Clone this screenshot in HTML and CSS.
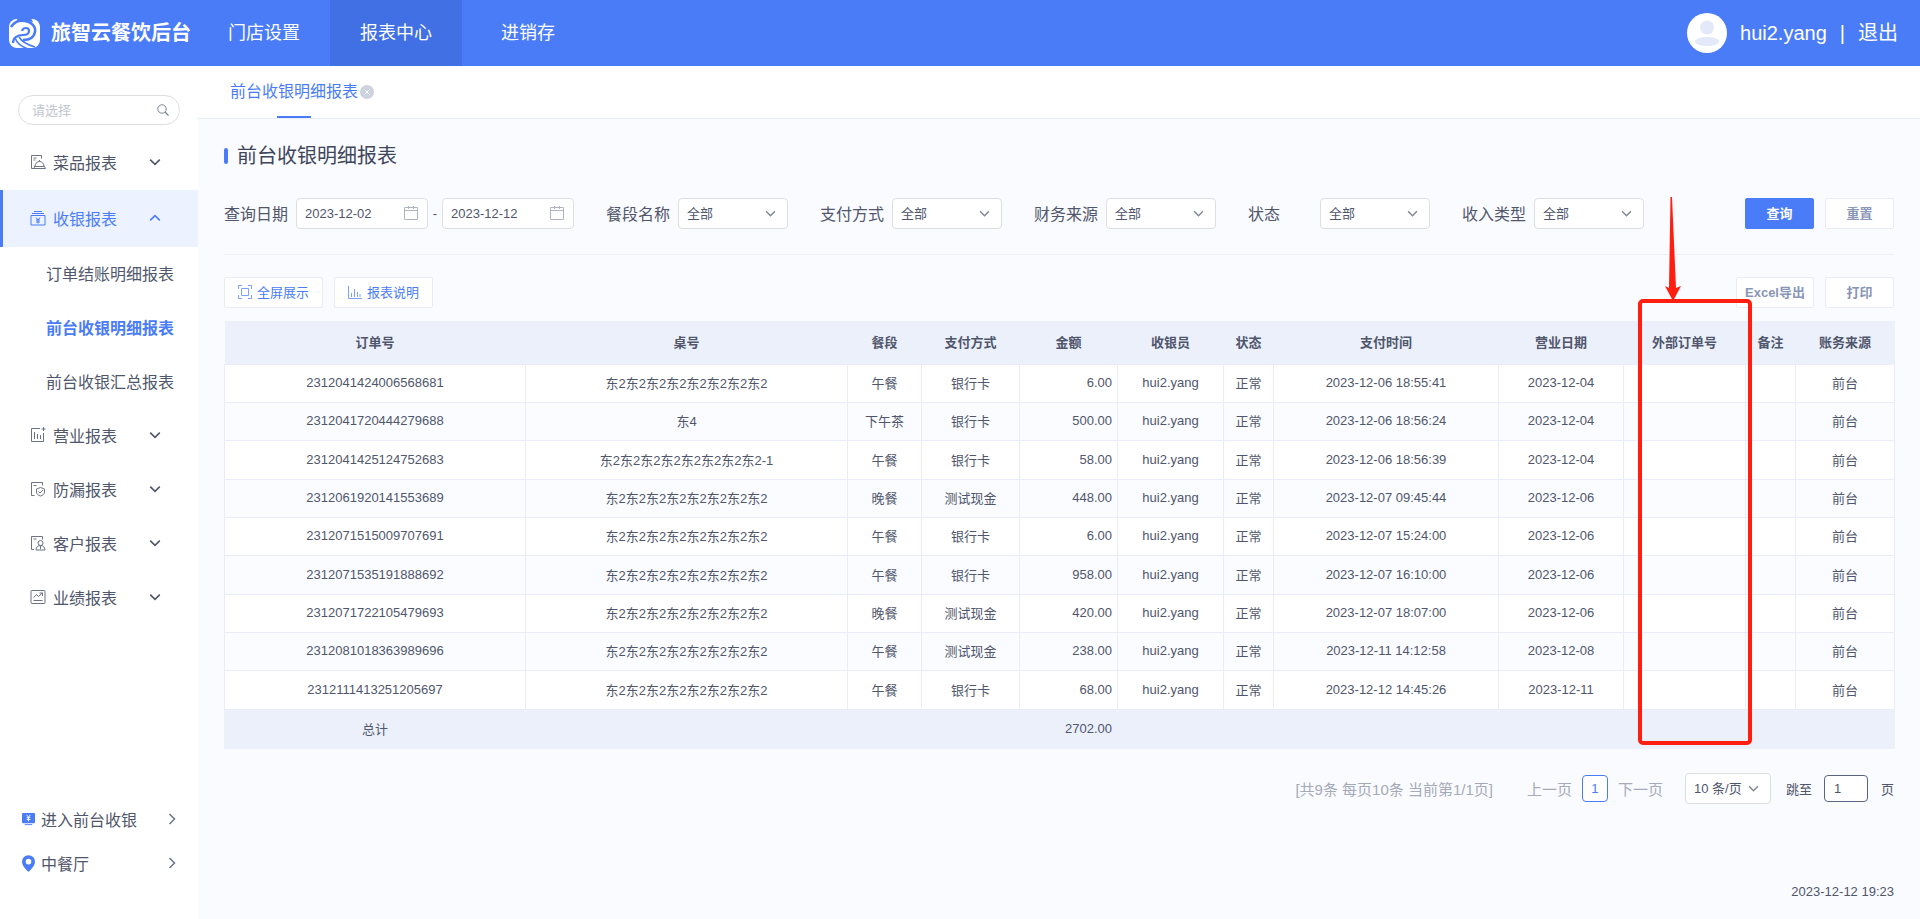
FILE: index.html
```
<!DOCTYPE html>
<html lang="zh-CN">
<head>
    <meta charset="UTF-8">
    <meta name="viewport" content="width=device-width, initial-scale=1.0">
    <title>前台收银明细报表</title>
    <link rel="stylesheet" href="styles.css">
</head>
<body>

<svg class="symbols" aria-hidden="true">
    <symbol id="down" viewBox="0 0 10 10"><path d="M1 3l4 4 4-4" fill="none" stroke="currentColor" stroke-width="1.3"/></symbol>
    <symbol id="right" viewBox="0 0 8 12"><path d="M1.5 1l5 5-5 5" fill="none" stroke="currentColor" stroke-width="1.5"/></symbol>
    <symbol id="calendar" viewBox="0 0 16 16"><path d="M1.5 2.5h13v12h-13zM1.5 5.5h13M5.5 1v3M10.5 1v3" fill="none" stroke="currentColor"/></symbol>
</svg>

<header class="header">
    <div class="brand">
        <svg class="logo" viewBox="0 0 31 31">
            <rect x="0" y="1" width="31" height="29" rx="8" fill="#fff"/>
            <path fill="#4a7cf8" d="M9 0h13l2 4-8-1-9 1z"/>
            <path fill="none" stroke="#4a7cf8" stroke-width="2.5" d="M2 9c3-5 8-7 14-6 7 1 11 6 10 11-1 6-6 8-12 8"/>
            <path fill="none" stroke="#4a7cf8" stroke-width="2.200" d="M13 13c1-4 7-4 7 0 0 3-3 4-6 4-6 0-10 3-10 8"/>
            <path fill="none" stroke="#4a7cf8" stroke-width="1.600" d="M6 20c2 5 7 9 13 11M10 19c3 5 9 8 16 10"/>
        </svg>
        <span>旅智云餐饮后台</span>
    </div>
    <nav class="top-nav">
        <a href="#">门店设置</a>
        <a href="#" class="active">报表中心</a>
        <a href="#">进销存</a>
    </nav>
    <div class="user">
        <svg class="avatar" viewBox="0 0 40 40">
            <circle cx="20" cy="20" r="20" fill="#fff"/>
            <circle cx="20" cy="14.500" r="7" fill="#e4e9fa"/>
            <ellipse cx="20" cy="28.500" rx="12" ry="4.500" fill="#e4e9fa"/>
        </svg>
        <span>hui2.yang</span>
        <span class="bar">|</span>
        <a href="#">退出</a>
    </div>
</header>

<div class="layout">
    <aside class="sidebar">
        <div class="search">
            <input type="text" placeholder="请选择" aria-label="请选择">
            <svg viewBox="0 0 12 12"><circle cx="5" cy="5" r="4.200" fill="none" stroke="currentColor"/><path d="M8 8l3.500 3.500" stroke="currentColor" stroke-width="1.300"/></svg>
        </div>

        <nav class="menu">
            <a href="#" class="menu-item">
                <svg class="icon" viewBox="0 0 16 16"><path d="M4 14.500H1.500v-13h10v3M3.500 4h3M3.500 6h2M5 12.500c0-3 2-5 4.500-5s4.500 2 4.500 5M4 14.500h11.500l-1-2h-10zM9.500 7.500V6"/></svg>
                <span>菜品报表</span>
                <svg class="arrow"><use href="#down"/></svg>
            </a>
            <a href="#" class="menu-item open">
                <svg class="icon" viewBox="0 0 16 16"><path d="M1 5.500h14v9.500H1zM2 3.500h12M4 1.500h8M6 7.500l2 2.500 2-2.500M8 10v3.500M6 10h4M6 12h4"/></svg>
                <span>收银报表</span>
                <svg class="arrow"><use href="#down"/></svg>
            </a>
            <a href="#" class="sub-item">订单结账明细报表</a>
            <a href="#" class="sub-item current">前台收银明细报表</a>
            <a href="#" class="sub-item">前台收银汇总报表</a>
            <a href="#" class="menu-item">
                <svg class="icon" viewBox="0 0 16 16"><path d="M10 1.500H1.500v13h12V6M4.500 5v7M7.500 7v5M10.500 8v4M13.500 0v4M11.500 2h4"/></svg>
                <span>营业报表</span>
                <svg class="arrow"><use href="#down"/></svg>
            </a>
            <a href="#" class="menu-item">
                <svg class="icon" viewBox="0 0 16 16"><path d="M4.500 14.500h-3v-13h11v3M3.500 4.500h3M10.500 6.500l4 1.500v3c0 2-2 3.500-4 4-2-.5-4-2-4-4V8zM8.500 10.500l1.500 1.500 3-3"/></svg>
                <span>防漏报表</span>
                <svg class="arrow"><use href="#down"/></svg>
            </a>
            <a href="#" class="menu-item">
                <svg class="icon" viewBox="0 0 16 16"><path d="M4 14.500H1.500v-13h11v3M3.500 4h3"/><circle cx="10.500" cy="8" r="2.500"/><path d="M6 15c0-3 2-4.500 4.500-4.500S15 12 15 15zM10.500 11v3"/></svg>
                <span>客户报表</span>
                <svg class="arrow"><use href="#down"/></svg>
            </a>
            <a href="#" class="menu-item">
                <svg class="icon" viewBox="0 0 16 16"><rect x="1" y="1.500" width="14" height="13" rx="1"/><path d="M3.500 8.500l3-3 2 2 4-3.500M9.500 4h3v3M3.500 11.500h9"/></svg>
                <span>业绩报表</span>
                <svg class="arrow"><use href="#down"/></svg>
            </a>
        </nav>

        <div class="side-links">
            <a href="#">
                <svg class="mark" viewBox="0 0 14 18"><rect x="0" y="2" width="14" height="11" rx="1" fill="currentColor"/><path d="M3 14.500h8" stroke="currentColor"/><path d="M5 4l2 2.500L9 4M7 6.500V11M5 7h4M5 9h4" fill="none" stroke="#fff"/></svg>
                <span>进入前台收银</span>
                <svg class="go"><use href="#right"/></svg>
            </a>
            <a href="#">
                <svg class="mark" viewBox="0 0 14 18"><path fill="currentColor" fill-rule="evenodd" d="M7 0a7 7 0 0 1 7 7c0 4-4 8-7 11C4 15 0 11 0 7a7 7 0 0 1 7-7zm0 4a3 3 0 1 0 0 6 3 3 0 0 0 0-6z"/></svg>
                <span>中餐厅</span>
                <svg class="go"><use href="#right"/></svg>
            </a>
        </div>
    </aside>

    <main class="main">
        <div class="tabs">
            <a href="#" class="tab">前台收银明细报表</a>
            <button class="tab-close" aria-label="关闭">
                <svg viewBox="0 0 14 14"><circle cx="7" cy="7" r="7" fill="#ccd2de"/><path d="M4.500 4.500l5 5M9.500 4.500l-5 5" stroke="#fff"/></svg>
            </button>
        </div>

        <section class="report">
            <h1>前台收银明细报表</h1>

            <form class="filters">
                <div class="field">
                    <label for="dateFrom">查询日期</label>
                    <div class="date"><input type="text" id="dateFrom" value="2023-12-02"><svg><use href="#calendar"/></svg></div>
                    <span class="dash">-</span>
                    <div class="date"><input type="text" aria-label="结束日期" value="2023-12-12"><svg><use href="#calendar"/></svg></div>
                </div>
                <div class="field">
                    <label for="meal">餐段名称</label>
                    <div class="select"><select id="meal"><option>全部</option></select><svg><use href="#down"/></svg></div>
                </div>
                <div class="field">
                    <label for="payType">支付方式</label>
                    <div class="select"><select id="payType"><option>全部</option></select><svg><use href="#down"/></svg></div>
                </div>
                <div class="field">
                    <label for="source">财务来源</label>
                    <div class="select"><select id="source"><option>全部</option></select><svg><use href="#down"/></svg></div>
                </div>
                <div class="field">
                    <label for="status">状态</label>
                    <div class="select"><select id="status"><option>全部</option></select><svg><use href="#down"/></svg></div>
                </div>
                <div class="field">
                    <label for="income">收入类型</label>
                    <div class="select"><select id="income"><option>全部</option></select><svg><use href="#down"/></svg></div>
                </div>
                <div class="actions">
                    <button type="button" class="btn primary">查询</button>
                    <button type="reset" class="btn">重置</button>
                </div>
            </form>

            <div class="toolbar">
                <button class="btn tool">
                    <svg viewBox="0 0 14 14"><path d="M3.500 3.500h7v7h-7zM.5 4V.5H4M10 .5h3.500V4M13.500 10v3.500H10M4 13.500H.5V10"/></svg>
                    全屏展示
                </button>
                <button class="btn tool">
                    <svg viewBox="0 0 14 14"><path d="M.5 1v12.500H14M3.500 8v4M6.500 4v8M9.500 7v5M12 9v3"/></svg>
                    报表说明
                </button>
                <div class="actions">
                    <button class="btn export">Excel导出</button>
                    <button class="btn">打印</button>
                </div>
            </div>

            <table>
                <colgroup>
                    <col class="c-order"><col class="c-desk"><col class="c-meal"><col class="c-pay"><col class="c-pay"><col class="c-cashier">
                    <col class="c-short"><col class="c-time"><col class="c-date"><col class="c-outer"><col class="c-short"><col class="c-source">
                </colgroup>
                <thead>
                    <tr><th>订单号</th><th>桌号</th><th>餐段</th><th>支付方式</th><th>金额</th><th>收银员</th><th>状态</th><th>支付时间</th><th>营业日期</th><th>外部订单号</th><th>备注</th><th>账务来源</th></tr>
                </thead>
                <tbody>
                    <tr><td>2312041424006568681</td><td>东2东2东2东2东2东2东2东2</td><td>午餐</td><td>银行卡</td><td class="num">6.00</td><td>hui2.yang</td><td>正常</td><td>2023-12-06 18:55:41</td><td>2023-12-04</td><td></td><td></td><td>前台</td></tr>
                    <tr><td>2312041720444279688</td><td>东4</td><td>下午茶</td><td>银行卡</td><td class="num">500.00</td><td>hui2.yang</td><td>正常</td><td>2023-12-06 18:56:24</td><td>2023-12-04</td><td></td><td></td><td>前台</td></tr>
                    <tr><td>2312041425124752683</td><td>东2东2东2东2东2东2东2东2-1</td><td>午餐</td><td>银行卡</td><td class="num">58.00</td><td>hui2.yang</td><td>正常</td><td>2023-12-06 18:56:39</td><td>2023-12-04</td><td></td><td></td><td>前台</td></tr>
                    <tr><td>2312061920141553689</td><td>东2东2东2东2东2东2东2东2</td><td>晚餐</td><td>测试现金</td><td class="num">448.00</td><td>hui2.yang</td><td>正常</td><td>2023-12-07 09:45:44</td><td>2023-12-06</td><td></td><td></td><td>前台</td></tr>
                    <tr><td>2312071515009707691</td><td>东2东2东2东2东2东2东2东2</td><td>午餐</td><td>银行卡</td><td class="num">6.00</td><td>hui2.yang</td><td>正常</td><td>2023-12-07 15:24:00</td><td>2023-12-06</td><td></td><td></td><td>前台</td></tr>
                    <tr><td>2312071535191888692</td><td>东2东2东2东2东2东2东2东2</td><td>午餐</td><td>银行卡</td><td class="num">958.00</td><td>hui2.yang</td><td>正常</td><td>2023-12-07 16:10:00</td><td>2023-12-06</td><td></td><td></td><td>前台</td></tr>
                    <tr><td>2312071722105479693</td><td>东2东2东2东2东2东2东2东2</td><td>晚餐</td><td>测试现金</td><td class="num">420.00</td><td>hui2.yang</td><td>正常</td><td>2023-12-07 18:07:00</td><td>2023-12-06</td><td></td><td></td><td>前台</td></tr>
                    <tr><td>2312081018363989696</td><td>东2东2东2东2东2东2东2东2</td><td>午餐</td><td>测试现金</td><td class="num">238.00</td><td>hui2.yang</td><td>正常</td><td>2023-12-11 14:12:58</td><td>2023-12-08</td><td></td><td></td><td>前台</td></tr>
                    <tr><td>2312111413251205697</td><td>东2东2东2东2东2东2东2东2</td><td>午餐</td><td>银行卡</td><td class="num">68.00</td><td>hui2.yang</td><td>正常</td><td>2023-12-12 14:45:26</td><td>2023-12-11</td><td></td><td></td><td>前台</td></tr>
                </tbody>
                <tfoot>
                    <tr><td>总计</td><td></td><td></td><td></td><td class="num">2702.00</td><td></td><td></td><td></td><td></td><td></td><td></td><td></td></tr>
                </tfoot>
            </table>

            <div class="pager">
                <span class="summary">[共9条 每页10条 当前第1/1页]</span>
                <a href="#">上一页</a>
                <a href="#" class="page">1</a>
                <a href="#">下一页</a>
                <div class="select size"><select aria-label="每页条数"><option>10 条/页</option></select><svg><use href="#down"/></svg></div>
                <label for="jump">跳至</label>
                <input type="text" id="jump" value="1">
                <span>页</span>
            </div>

            <div class="clock">2023-12-12 19:23</div>

            <!-- 标注：外部订单号列 -->
            <svg class="note-arrow" viewBox="0 0 16 104"><path fill="#ff1e10" d="M5.500 0h1.500l4 91 5-2-8 15-8-15 4 2z"/></svg>
            <div class="note-box"></div>
        </section>
    </main>
</div>

</body>
</html>
```

FILE: styles.css
```
* {
    box-sizing: border-box;
}
body {
    margin: 0;
    min-height: 100vh;
    display: flex;
    flex-direction: column;
    font-family: "Liberation Sans", "Noto Sans CJK SC", sans-serif;
    font-size: 13px;
    color: #50566b;
    background-color: #fafbff;
}
a {
    color: inherit;
    text-decoration: none;
}
input, select, button {
    font-family: inherit;
    font-size: 13px;
    color: inherit;
    margin: 0;
}
.symbols {
    position: absolute;
    width: 0;
    height: 0;
}

/* header */
.header {
    display: flex;
    height: 66px;
    background-color: #4a7cf8;
    color: #fff;
    font-size: 20px;
    line-height: 67px;
}
.brand {
    width: 198px;
    display: flex;
    align-items: center;
    gap: 11px;
    padding-left: 9px;
    font-weight: bold;
    white-space: nowrap;
}
.logo {
    width: 31px;
    height: 31px;
}
.top-nav {
    display: flex;
    font-size: 18px;
}
.top-nav a {
    width: 132px;
    text-align: center;
}
.top-nav .active {
    background-color: #4170e5;
}
.user {
    display: flex;
    align-items: center;
    gap: 13px;
    margin-left: auto;
    padding-right: 22px;
}
.avatar {
    width: 40px;
    height: 40px;
}

/* sidebar */
.layout {
    flex: 1;
    display: flex;
}
.sidebar {
    width: 198px;
    flex-shrink: 0;
    display: flex;
    flex-direction: column;
    padding: 29px 0 34px;
    background-color: #fff;
    font-size: 16px;
}
.search {
    position: relative;
    margin: 0 18px 11px;
}
.search input {
    display: block;
    width: 100%;
    height: 30px;
    padding: 0 32px 0 13px;
    border: 1px solid #dcdee2;
    border-radius: 15px;
}
.search input::placeholder {
    color: #c3c6d0;
}
.search svg {
    position: absolute;
    right: 11px;
    top: 9px;
    width: 12px;
    height: 12px;
    color: #7d8496;
}
.menu-item {
    display: flex;
    align-items: center;
    height: 54px;
    padding: 0 0 2px 30px;
}
.icon {
    width: 16px;
    height: 16px;
    margin-right: 7px;
    fill: none;
    stroke: #6d7285;
}
.arrow {
    width: 12px;
    height: 12px;
    margin-left: 32px;
}
.menu-item.open {
    height: 57px;
    padding-left: 27px;
    border-left: 3px solid #4a7cf8;
    background-color: #ecf2ff;
    color: #4a7cf8;
}
.open .icon {
    stroke: #4a7cf8;
}
.open .arrow {
    transform: rotate(180deg);
}
.sub-item {
    display: block;
    height: 54px;
    padding-left: 46px;
    line-height: 56px;
}
.sub-item.current {
    color: #4a7cf8;
    font-weight: bold;
}
.side-links {
    margin-top: auto;
}
.side-links a {
    display: flex;
    align-items: center;
    height: 44px;
    padding: 0 22px;
}
.mark {
    width: 13px;
    height: 17px;
    margin-right: 6px;
    color: #4a7cf8;
}
.go {
    width: 8px;
    height: 12px;
    margin-left: auto;
    color: #6d7388;
}

/* main */
.main {
    flex: 1;
    min-width: 0;
    display: flex;
    flex-direction: column;
}
.tabs {
    display: flex;
    align-items: center;
    gap: 2px;
    height: 53px;
    padding-left: 32px;
    background-color: #fff;
    border-bottom: 1px solid #e9edf5;
    font-size: 16px;
}
.tab {
    position: relative;
    line-height: 52px;
    color: #4a7cf8;
}
.tab::after {
    content: "";
    position: absolute;
    left: 50%;
    bottom: 0;
    width: 34px;
    height: 2px;
    margin-left: -17px;
    background-color: #4a7cf8;
}
.tab-close {
    width: 14px;
    height: 14px;
    padding: 0;
    border: none;
    background: none;
}
.tab-close svg {
    display: block;
}
.report {
    position: relative;
    flex: 1;
    display: flex;
    flex-direction: column;
    padding: 22px 26px 17px;
}
h1 {
    display: flex;
    align-items: center;
    gap: 9px;
    margin: 0;
    font-size: 20px;
    font-weight: normal;
    line-height: 30px;
    color: #40465a;
}
h1::before {
    content: "";
    width: 4px;
    height: 16px;
    border-radius: 2px;
    background-color: #4a7cf8;
}
.filters {
    display: flex;
    gap: 32px;
    padding: 27px 0 25px;
    border-bottom: 1px solid #eef0f6;
}
.field {
    display: flex;
    align-items: center;
}
.field label {
    width: 72px;
    padding-bottom: 2px;
    font-size: 16px;
    white-space: nowrap;
}
.date, .select {
    position: relative;
    width: 132px;
}
.select {
    width: 110px;
}
.date input, .select select {
    display: block;
    width: 100%;
    height: 31px;
    padding: 0 8px;
    border: 1px solid #dcdee2;
    border-radius: 4px;
    background-color: #fff;
    appearance: none;
}
.date svg {
    position: absolute;
    right: 9px;
    top: 7px;
    width: 16px;
    height: 16px;
    color: #b0b4c0;
}
.select svg {
    position: absolute;
    right: 12px;
    top: 10px;
    width: 11px;
    height: 11px;
    color: #808695;
    pointer-events: none;
}
.dash {
    width: 14px;
    text-align: center;
}
.actions {
    display: flex;
    gap: 11px;
    margin-left: auto;
}
.btn {
    width: 69px;
    height: 31px;
    padding: 0 0 2px;
    border: 1px solid #e9ecf6;
    border-radius: 2px;
    background-color: #fff;
    color: #8a96b8;
    font-weight: bold;
}
.btn.primary {
    border-color: #4a7cf8;
    background-color: #4a7cf8;
    color: #fff;
}
.btn.export {
    width: 78px;
}
.toolbar {
    display: flex;
    gap: 11px;
    padding: 22px 0 13px;
}
.btn.tool {
    display: flex;
    align-items: center;
    justify-content: center;
    gap: 5px;
    width: 99px;
    color: #4a7cf8;
    font-weight: normal;
}
.tool svg {
    width: 14px;
    height: 14px;
    fill: none;
    stroke: #7c9ff9;
}

/* table */
table {
    width: 100%;
    table-layout: fixed;
    border-collapse: collapse;
    text-align: center;
}
th {
    height: 43px;
    padding: 0 0 2px;
    background-color: #ebf0fb;
}
td {
    height: 38px;
    padding: 0 5px 1px;
    border: 1px solid #e9edfa;
    background-color: #fff;
}
tbody tr:nth-child(even) td {
    background-color: #fafcff;
}
tbody tr:nth-child(3n) td {
    height: 39px;
}
tfoot td {
    height: 39px;
    border-color: #ebf0fb;
    background-color: #ebf0fb;
}
.num {
    text-align: right;
}
.c-order {
    width: 301px;
}
.c-desk {
    width: 322px;
}
.c-meal {
    width: 74px;
}
.c-pay {
    width: 98px;
}
.c-cashier {
    width: 106px;
}
.c-short {
    width: 50px;
}
.c-time {
    width: 225px;
}
.c-date {
    width: 125px;
}
.c-outer {
    width: 122px;
}
.c-source {
    width: 99px;
}

/* pager */
.pager {
    display: flex;
    justify-content: flex-end;
    align-items: center;
    margin-top: 24px;
}
.pager a, .summary {
    font-size: 15px;
    color: #a5aab8;
}
.summary {
    margin-right: 34px;
}
.pager .page {
    width: 26px;
    margin: 0 10px;
    border: 1px solid #4a7cf8;
    border-radius: 4px;
    background-color: #fff;
    color: #4a7cf8;
    font-size: 13px;
    line-height: 25px;
    text-align: center;
}
.select.size {
    width: 86px;
    margin: 0 15px 0 22px;
}
.pager label {
    margin-right: 12px;
}
#jump {
    width: 44px;
    height: 27px;
    margin-right: 13px;
    padding: 0 9px;
    border: 1px solid #5b6480;
    border-radius: 4px;
    background-color: #fff;
}
.clock {
    margin-top: auto;
    line-height: 20px;
    text-align: right;
}

/* red mark over the column */
.note-arrow {
    position: absolute;
    top: 78px;
    right: 239px;
    width: 16px;
    height: 104px;
}
.note-box {
    position: absolute;
    top: 180px;
    right: 168px;
    width: 114px;
    height: 446px;
    border: 4px solid #ff1e10;
    border-radius: 5px;
}
```
